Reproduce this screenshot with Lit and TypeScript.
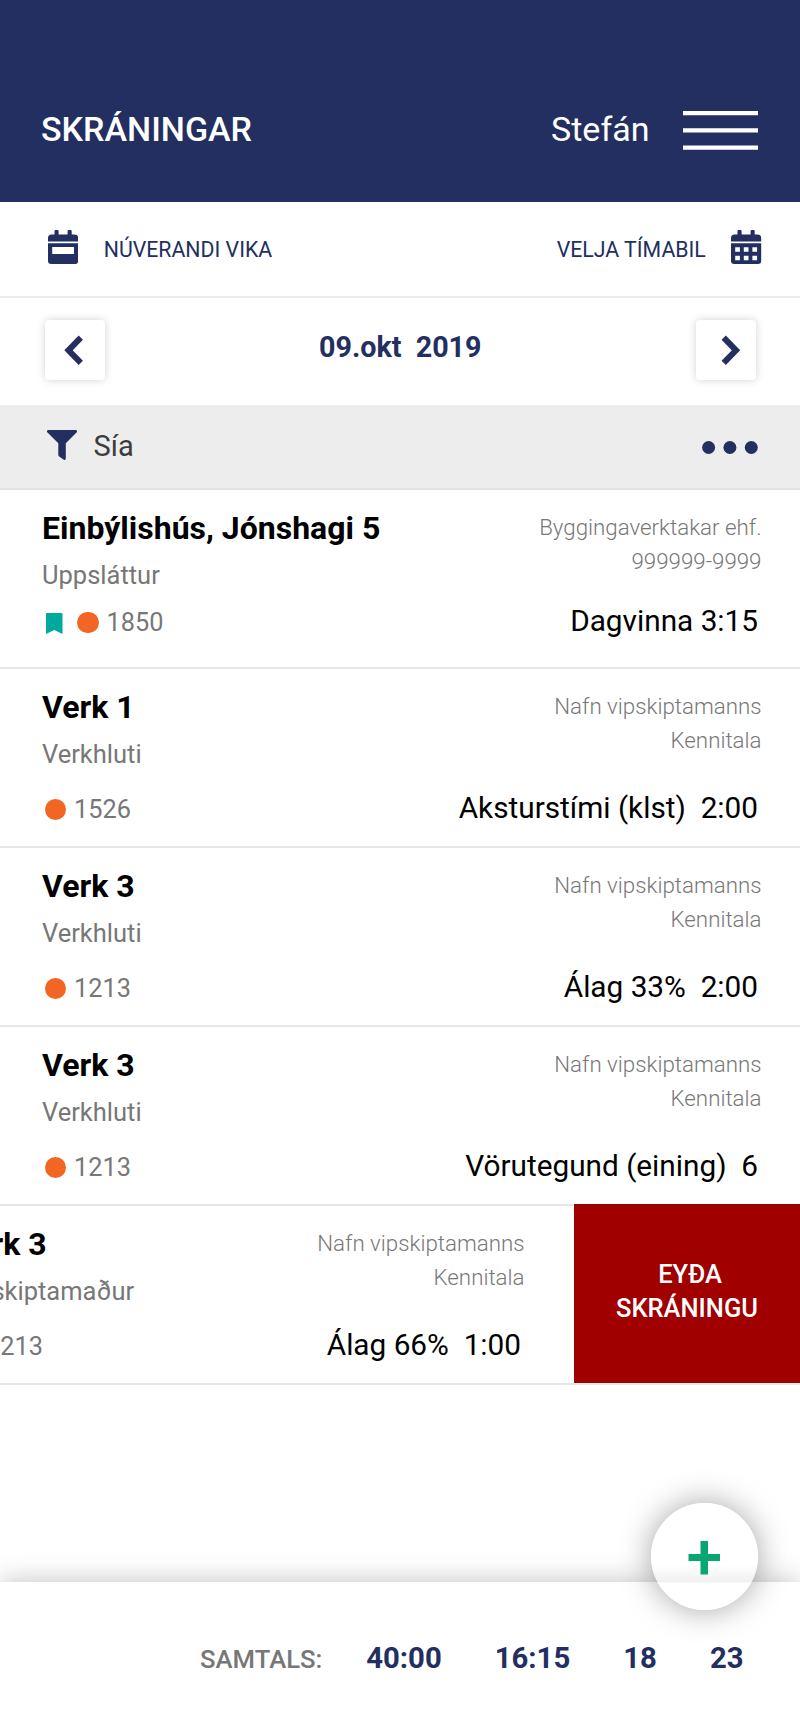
import { LitElement, html, css, svg, nothing } from "lit";
import { customElement, property } from "lit/decorators.js";

interface Entry {
  title: string;
  part: string;
  code: string;
  client: string;
  clientId: string;
  kind: string;
  amount: string;
  bookmarked?: boolean;
  swiped?: boolean;
}

const entries: Entry[] = [
  { title: "Einbýlishús, Jónshagi 5", part: "Uppsláttur", code: "1850", client: "Byggingaverktakar ehf.", clientId: "999999-9999", kind: "Dagvinna ", amount: "3:15", bookmarked: true },
  { title: "Verk 1", part: "Verkhluti", code: "1526", client: "Nafn vipskiptamanns", clientId: "Kennitala", kind: "Aksturstími (klst)  ", amount: "2:00" },
  { title: "Verk 3", part: "Verkhluti", code: "1213", client: "Nafn vipskiptamanns", clientId: "Kennitala", kind: "Álag 33%  ", amount: "2:00" },
  { title: "Verk 3", part: "Verkhluti", code: "1213", client: "Nafn vipskiptamanns", clientId: "Kennitala", kind: "Vörutegund (eining)  ", amount: "6" },
  { title: "Verk 3", part: "Viðskiptamaður", code: "1213", client: "Nafn vipskiptamanns", clientId: "Kennitala", kind: "Álag 66%  ", amount: "1:00", swiped: true },
];

const calendarTop = svg`<path d="M0 11.4V8a3.6 3.6 0 0 1 3.6-3.6H6.5V1.2A1.1 1.1 0 0 1 7.6 0h1.9a1.1 1.1 0 0 1 1.1 1.2V4.4h9V1.2A1.1 1.1 0 0 1 20.7 0h1.9a1.1 1.1 0 0 1 1.1 1.2V4.4h2.9A3.6 3.6 0 0 1 30.2 8v3.4z"/>`;

@customElement("entry-row")
export class EntryRow extends LitElement {
  @property({ attribute: false }) entry!: Entry;

  static styles = css`
    :host { display: block; }
    .row { display: flex; height: 179px; box-sizing: border-box; border-bottom: 2px solid #e6e6e6; white-space: pre; }
    .body { flex: 0 0 800px; box-sizing: border-box; display: flex; justify-content: space-between; padding: 19px 38.5px 20px 42px; }
    .tight { padding-bottom: 28px; }
    .swiped { justify-content: flex-end; }
    .swiped .body { flex-basis: 651px; margin-right: 11px; }
    .side { display: flex; flex-direction: column; justify-content: space-between; }
    .right { text-align: right; padding-top: 1px; }
    .title { font-size: 32px; line-height: 38px; font-weight: 700; color: #000; margin-bottom: 13px; }
    .part { font-size: 25.5px; line-height: 30px; color: #777; }
    .meta { display: flex; align-items: center; font-size: 25.3px; line-height: 30px; color: #777; margin-bottom: 1px; }
    .dot { width: 21.5px; height: 21.5px; border-radius: 50%; background: #f26522; margin: 0 8px 1px 2.5px; }
    .mark { width: 16.5px; height: 21px; fill: #00a99d; margin: 0 12px 0 4px; }
    .client { font-size: 22.3px; line-height: 34px; font-weight: 300; color: #777; }
    .value { font-size: 29.75px; line-height: 36px; color: #000; padding-right: 3.5px; }
    .delete { flex: 0 0 226px; height: 179px; margin-top: -2px; padding-bottom: 5px; display: flex; flex-direction: column; align-items: center; justify-content: center; background: #a00000; color: #fff; font-size: 25.5px; line-height: 34px; font-weight: 500; box-sizing: border-box; }
    .verb { padding-left: 6px; }
  `;

  render() {
    const e = this.entry;
    return html`<div class="row ${e.swiped ? "swiped" : ""}"><div class="body ${e.bookmarked ? "tight" : ""}"><div class="side"><div><div class="title">${e.title}</div><div class="part">${e.part}</div></div><div class="meta">${e.bookmarked ? html`<svg class="mark" viewBox="0 0 16.5 21"><path d="M1 0h14.5a1 1 0 0 1 1 1v20l-8.25-4L0 21V1a1 1 0 0 1 1-1z"/></svg>` : nothing}<div class="dot"></div><span>${e.code}</span></div></div><div class="side right"><div class="client">${e.client}<br>${e.clientId}</div><div class="value">${e.kind}${e.amount}</div></div></div>${e.swiped ? html`<div class="delete"><span class="verb">EYÐA</span><span>SKRÁNINGU</span></div>` : nothing}</div>`;
  }
}

@customElement("app-root")
export class AppRoot extends LitElement {
  static styles = css`
    :host { display: flex; flex-direction: column; width: 800px; height: 1731px; overflow: hidden; background: #fff; font-family: Roboto, "Liberation Sans", sans-serif; color: #222f60; white-space: pre; }
    .header { height: 202px; box-sizing: border-box; padding: 58px 42.5px 0 41px; display: flex; align-items: center; background: #222f60; color: #fff; font-size: 34px; line-height: 40px; }
    .name { margin-left: auto; margin-bottom: 3px; }
    .heading { font-weight: 500; margin-bottom: 3px; }
    .menu { width: 75px; height: 39px; margin-left: 33px; fill: #fff; }
    .period { height: 96px; box-sizing: border-box; border-bottom: 2px solid #ececec; padding: 0 38.5px 0 48px; display: flex; align-items: center; justify-content: space-between; font-size: 21.3px; line-height: 26px; }
    .pick { display: flex; align-items: center; gap: 25.5px; }
    .label { margin-top: 2px; }
    .cal { width: 30.2px; height: 34px; fill: #222f60; margin-bottom: 5px; }
    .week { height: 107px; box-sizing: border-box; padding: 0 44.5px 4px 45px; display: flex; align-items: center; justify-content: space-between; }
    .arrow { width: 60px; height: 60px; border-radius: 4px; box-shadow: 0 0 9px rgba(0,0,0,.18); display: flex; align-items: center; justify-content: center; }
    .chev { width: 60px; height: 60px; fill: none; stroke: #222f60; stroke-width: 6; stroke-linecap: butt; }
    .date { font-size: 28.7px; line-height: 36px; font-weight: 700; margin-bottom: 6px; }
    .filter { height: 85px; box-sizing: border-box; background: #ededed; border-bottom: 2px solid #e2e2e2; display: flex; align-items: center; padding: 0 42px 0 46.5px; }
    .funnel { width: 30px; height: 30px; fill: #222f60; margin-bottom: 3px; }
    .sia { font-size: 29px; line-height: 36px; color: #3c3c3c; margin-left: 17px; margin-bottom: 1px; }
    .more { width: 56px; height: 13px; margin-left: auto; margin-top: 2px; fill: #222f60; }
    .footer { margin-top: auto; height: 149px; box-sizing: border-box; position: relative; padding: 0 56.5px 0 200px; display: flex; align-items: center; box-shadow: 0 0 26px rgba(0,0,0,.25); background: #fff; }
    .sum { font-size: 25.7px; line-height: 30px; color: #777; font-weight: 500; margin-top: 5px; margin-right: auto; }
    .totals { display: flex; gap: 53px; font-size: 29.3px; line-height: 36px; font-weight: 700; margin-top: 2px; }
    .fab { position: absolute; right: 42px; top: -79px; width: 107px; height: 107px; border-radius: 50%; background: linear-gradient(#fff 58%, #f0f0f0 74%, #fff 74.5%); box-shadow: 0 0 32px rgba(0,0,0,.36); }
    .plus { display: block; width: 107px; height: 107px; fill: #0aa574; }
  `;

  render() {
    return html`<div class="header"><span class="heading">SKRÁNINGAR</span><span class="name">Stefán</span><svg class="menu" viewBox="0 0 75 39"><path d="M0 0h75v4.3H0zM0 17.3h75v4.3H0zM0 34.5h75v4.3H0z"/></svg></div>
<div class="period"><div class="pick"><svg class="cal" viewBox="0 0 30.2 34">${calendarTop}<path fill-rule="evenodd" d="M0 13.3h30.2v17.5A3.2 3.2 0 0 1 27 34H3.2A3.2 3.2 0 0 1 0 30.8zM4.2 17v7h21.8v-7z"/></svg><span class="label">NÚVERANDI VIKA</span></div><div class="pick"><span class="label">VELJA TÍMABIL</span><svg class="cal" viewBox="0 0 30.2 34">${calendarTop}<path fill-rule="evenodd" d="M0 13.3h30.2v17.5A3.2 3.2 0 0 1 27 34H3.2A3.2 3.2 0 0 1 0 30.8zM4.2 17.2v4.6h4.7v-4.6zM12.8 17.2v4.6h4.7v-4.6zM21.4 17.2v4.6h4.7v-4.6zM4.2 25.7v4.6h4.7v-4.6zM12.8 25.7v4.6h4.7v-4.6zM21.4 25.7v4.6h4.7v-4.6z"/></svg></div></div>
<div class="week"><div class="arrow"><svg class="chev" viewBox="0 0 60 60"><path d="M35.8 17.7L23.5 30.3L35.8 42.9"/></svg></div><span class="date">09.okt  2019</span><div class="arrow"><svg class="chev" viewBox="0 0 60 60"><path d="M27.7 17.7L40 30.3L27.7 42.9"/></svg></div></div>
<div class="filter"><svg class="funnel" viewBox="0 0 30 30"><path d="M1.4 0H28.6Q31 .6 29.5 2.5L18.8 13.3V28.6Q18.6 30.5 16.8 29.7L12.2 26.5Q11.3 25.8 11.3 24.9V13.3L.5 2.5Q-1 .6 1.4 0z"/></svg><span class="sia">Sía</span><svg class="more" viewBox="0 0 56 13"><circle cx="6.6" cy="6.5" r="6.5"/><circle cx="27.9" cy="6.5" r="6.5"/><circle cx="49.3" cy="6.5" r="6.5"/></svg></div>
${entries.map((e) => html`<entry-row .entry=${e}></entry-row>`)}
<div class="footer"><span class="sum">SAMTALS:</span><div class="totals"><span>40:00</span><span>16:15</span><span>18</span><span>23</span></div><div class="fab"><svg class="plus" viewBox="0 0 107 107"><path d="M49.5 38h7.5v13h12v7h-12v13.5h-7.5V58H37.5v-7h12z"/></svg></div></div>`;
  }
}
